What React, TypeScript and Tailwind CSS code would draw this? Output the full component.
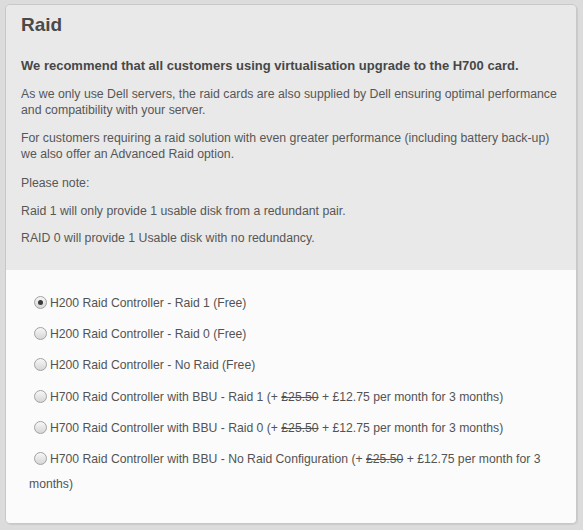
import { useState } from "react";

type Option = {
	id: string;
	label: string;
	price?: boolean;
};

const options: Option[] = [
	{ id: "h200-r1", label: "H200 Raid Controller - Raid 1 (Free)" },
	{ id: "h200-r0", label: "H200 Raid Controller - Raid 0 (Free)" },
	{ id: "h200-none", label: "H200 Raid Controller - No Raid (Free)" },
	{ id: "h700-r1", label: "H700 Raid Controller with BBU - Raid 1", price: true },
	{ id: "h700-r0", label: "H700 Raid Controller with BBU - Raid 0", price: true },
	{ id: "h700-none", label: "H700 Raid Controller with BBU - No Raid Configuration", price: true },
];

function Radio({ checked }: { checked: boolean }) {
	return (
		<span className="relative inline-block w-[13px] h-[13px] ml-[5px] mr-[3px] align-[-2px] rounded-full border border-[#a2a2a2] bg-gradient-to-b from-[#f7f7f7] to-[#d6d6d6]">
			{checked && (
				<span className="absolute left-[3px] top-[3px] w-[5px] h-[5px] rounded-full bg-[#3a3a3a]"></span>
			)}
		</span>
	);
}

export default function App() {
	const [selected, setSelected] = useState("h200-r1");

	return (
		<div
			className="min-h-[530px] bg-[#dcdcdc] pt-[4px] pl-[5px] pr-[6px] pb-[6px]"
			style={{ fontFamily: '"Liberation Sans", Arial, sans-serif' }}
		>
			<div className="rounded-[5px] border border-[#c8c8c8] overflow-hidden shadow-[1px_1px_1px_rgba(0,0,0,0.08)]">
				{/* intro */}
				<div className="bg-[#e9e9e9] px-[15px] pt-[8px] pb-[24px] text-[12.3px] leading-[16px] text-[#575757]">
					<h2 className="text-[19px] leading-[24px] font-bold text-[#4a4a4a]">Raid</h2>
					<p className="mt-[20px] text-[13px] leading-[18px] font-bold text-[#474747]">
						We recommend that all customers using virtualisation upgrade to the H700 card.
					</p>
					<p className="mt-[11px]">
						As we only use Dell servers, the raid cards are also supplied by Dell ensuring optimal performance
						and compatibility with your server.
					</p>
					<p className="mt-[12px]">
						For customers requiring a raid solution with even greater performance (including battery back-up)
						we also offer an Advanced Raid option.
					</p>
					<p className="mt-[13px]">Please note:</p>
					<p className="mt-[12px]">Raid 1 will only provide 1 usable disk from a redundant pair.</p>
					<p className="mt-[11px]">RAID 0 will provide 1 Usable disk with no redundancy.</p>
				</div>

				{/* options */}
				<div className="bg-[#fbfbfb] pl-[23px] pr-[20px] pt-[20.5px] pb-[26px] text-[12.2px] leading-[25px] text-[#535353] flex flex-col gap-[6.4px]">
					{options.map((opt) => (
						<label key={opt.id} className="block cursor-pointer" onClick={() => setSelected(opt.id)}>
							<Radio checked={selected === opt.id} />
							{opt.label}
							{opt.price && (
								<>
									{" (+ "}
									<span className="line-through">£25.50</span>
									{" + £12.75 per month for 3 months)"}
								</>
							)}
						</label>
					))}
				</div>
			</div>
		</div>
	);
}
